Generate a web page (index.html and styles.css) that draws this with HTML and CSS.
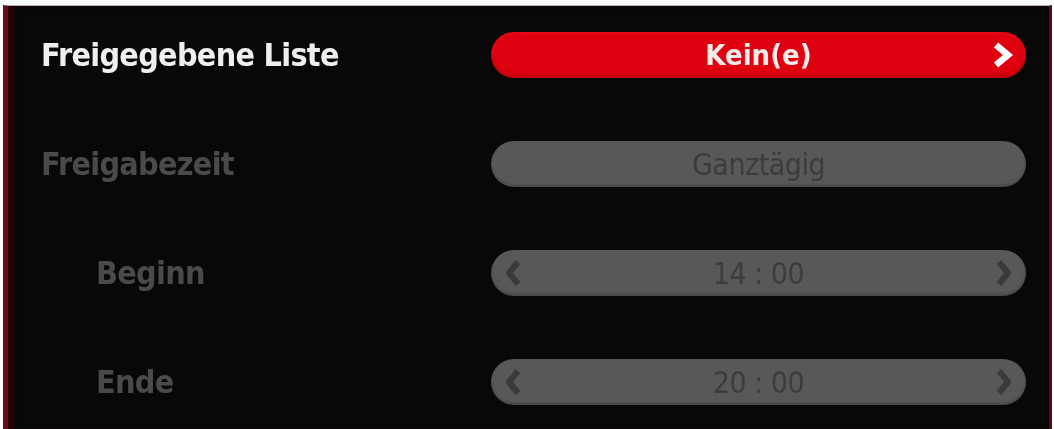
FILE: index.html
```html
<!DOCTYPE html>
<html lang="de">
<head>
<meta charset="utf-8">
<title>Freigabe</title>
<link rel="stylesheet" href="styles.css">
</head>
<body>
<div class="screen">
  <div class="row">
    <div class="label active">Freigegebene Liste</div>
    <div class="pill pill-red">
      <span class="value">Kein(e)</span>
      <svg class="chev chev-r" width="24" height="26" viewBox="0 0 24 26"><path d="M6 3 L18 13 L6 23" fill="none" stroke="#fff" stroke-width="6.5" stroke-linejoin="miter"/></svg>
    </div>
  </div>
  <div class="row">
    <div class="label">Freigabezeit</div>
    <div class="pill pill-gray">
      <span class="value">Ganztägig</span>
    </div>
  </div>
  <div class="row">
    <div class="label indent">Beginn</div>
    <div class="pill pill-gray">
      <svg class="chev chev-l" width="20" height="28" viewBox="0 0 20 28"><path d="M15 3 L6 14 L15 25" fill="none" stroke="#3a3a3a" stroke-width="6" stroke-linejoin="round"/></svg>
      <span class="value">14 : 00</span>
      <svg class="chev chev-r" width="20" height="28" viewBox="0 0 20 28"><path d="M5 3 L14 14 L5 25" fill="none" stroke="#3a3a3a" stroke-width="6" stroke-linejoin="round"/></svg>
    </div>
  </div>
  <div class="row">
    <div class="label indent">Ende</div>
    <div class="pill pill-gray">
      <svg class="chev chev-l" width="20" height="28" viewBox="0 0 20 28"><path d="M15 3 L6 14 L15 25" fill="none" stroke="#3a3a3a" stroke-width="6" stroke-linejoin="round"/></svg>
      <span class="value">20 : 00</span>
      <svg class="chev chev-r" width="20" height="28" viewBox="0 0 20 28"><path d="M5 3 L14 14 L5 25" fill="none" stroke="#3a3a3a" stroke-width="6" stroke-linejoin="round"/></svg>
    </div>
  </div>
</div>
</body>
</html>
```
FILE: styles.css
```css
html, body {
  margin: 0;
  padding: 0;
  background: #fbfbfb;
}
body {
  width: 1054px;
  height: 429px;
  overflow: hidden;
  font-family: "DejaVu Sans Condensed", "DejaVu Sans", sans-serif;
}
.screen {
  margin: 5px 2px 0 3px;
  height: 424px;
  box-sizing: border-box;
  background: #080808;
  border-top: 1px solid #b0b0b0;
  border-left: 5px solid #6a0a18;
  border-right: 3px solid #5a0814;
  box-shadow: inset 5px 0 5px -1px #2a0308;
  padding: 26px 23px 0 33px;
  display: flex;
  flex-direction: column;
  gap: 63px;
}
.row {
  display: flex;
  align-items: center;
  height: 46px;
}
.label {
  flex: 1;
  font-weight: bold;
  font-size: 32px;
  color: #4a4a4a;
  letter-spacing: -0.7px;
  filter: blur(0.6px);
}
.label.active {
  color: #efefef;
}
.label.indent {
  padding-left: 55px;
}
.pill {
  width: 535px;
  height: 46px;
  border-radius: 23px;
  display: flex;
  align-items: center;
  justify-content: center;
  position: relative;
  filter: blur(0.7px);
}
.pill-red {
  background: #df0010;
  box-shadow: inset 0 -3px 4px rgba(120, 0, 0, 0.35), inset 0 2px 3px rgba(255, 40, 40, 0.3);
}
.pill-gray {
  background: #585858;
  box-shadow: inset 0 -2px 3px rgba(0, 0, 0, 0.2);
}
.value {
  font-size: 29px;
  font-weight: bold;
  color: #3c3c3c;
}
.pill-red .value {
  color: #f6ecea;
}
.pill-gray .value {
  font-weight: normal;
  font-size: 30px;
  letter-spacing: -0.5px;
}
.chev {
  position: absolute;
  top: 50%;
  transform: translateY(-50%);
}
.chev-r {
  right: 12px;
}
.chev-l {
  left: 12px;
}
```
